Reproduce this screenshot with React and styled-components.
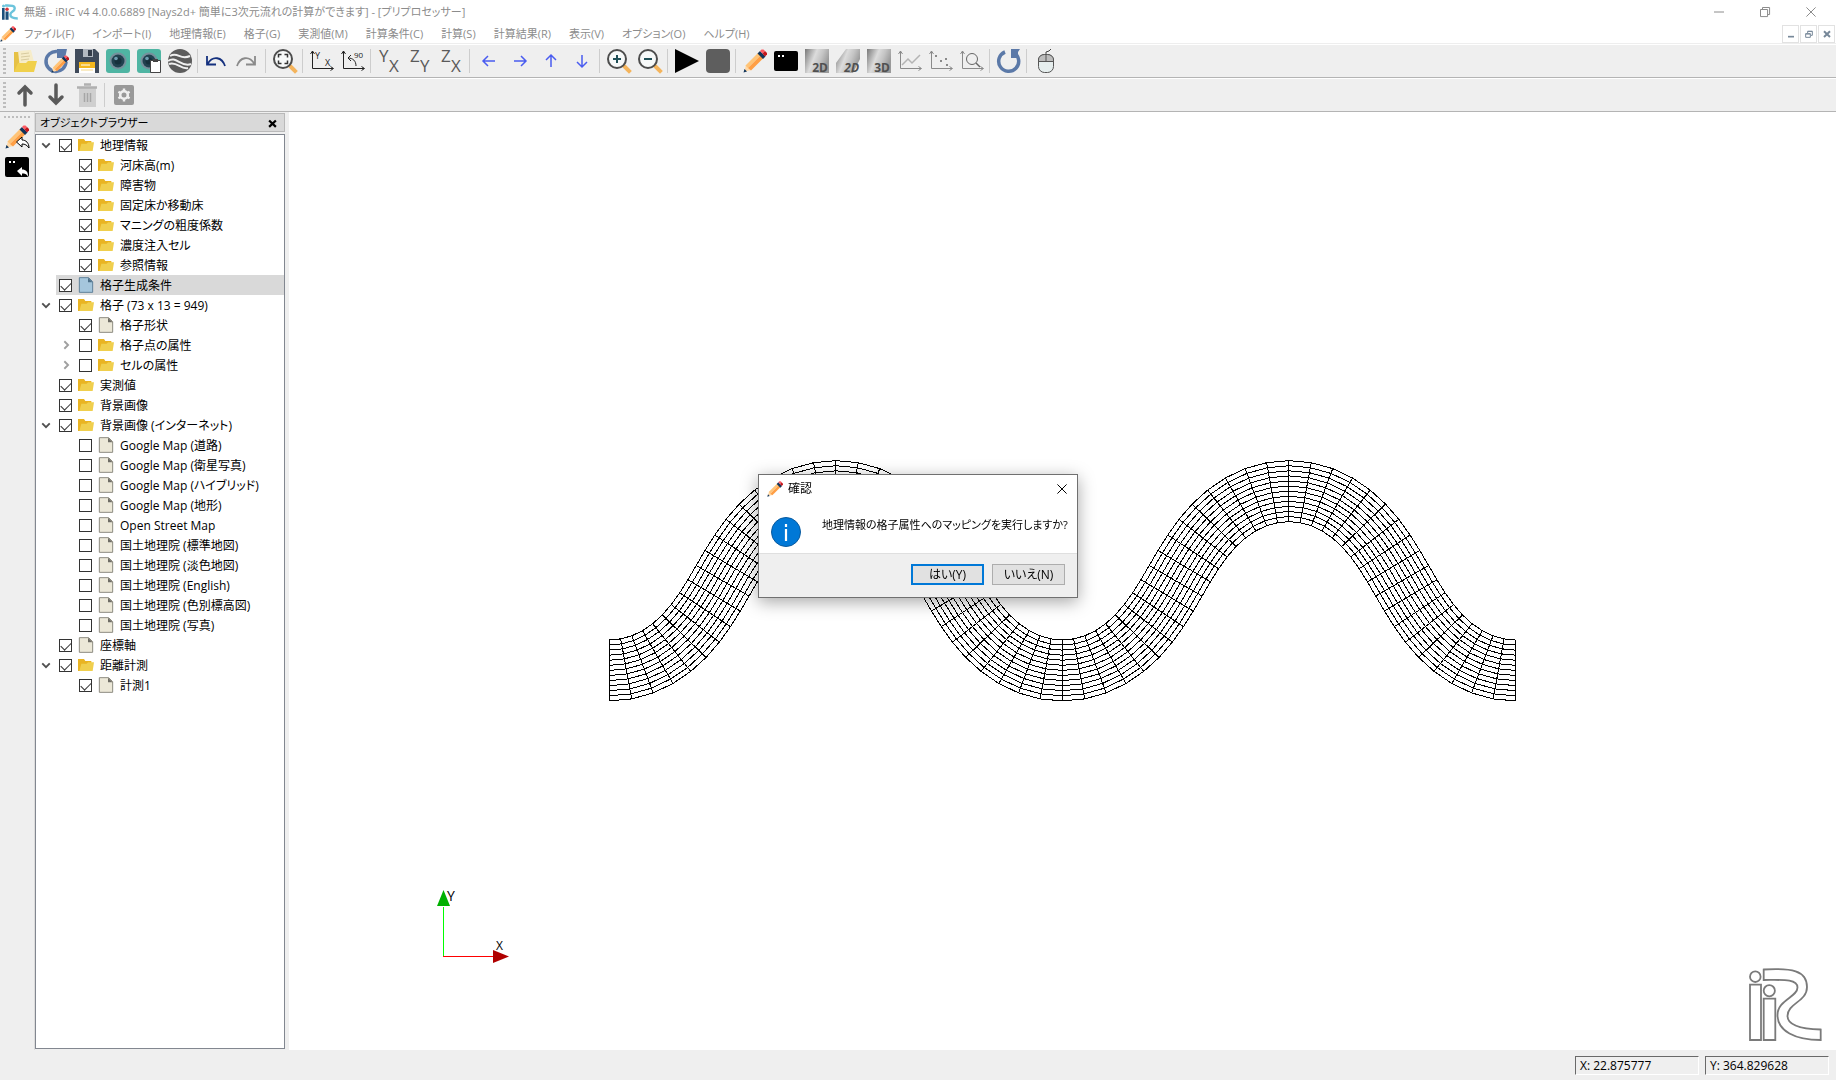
import React, { useState } from "react";
import styled, { createGlobalStyle, css } from "styled-components";

const TREE = [
  { label: "地理情報", depth: 0, open: true, checked: true, icon: "folder" },
  { label: "河床高(m)", depth: 1, checked: true, icon: "folder" },
  { label: "障害物", depth: 1, checked: true, icon: "folder" },
  { label: "固定床か移動床", depth: 1, checked: true, icon: "folder" },
  { label: "マニングの粗度係数", depth: 1, checked: true, icon: "folder" },
  { label: "濃度注入セル", depth: 1, checked: true, icon: "folder" },
  { label: "参照情報", depth: 1, checked: true, icon: "folder" },
  { label: "格子生成条件", depth: 0, checked: true, icon: "file", selected: true },
  { label: "格子 (73 x 13 = 949)", depth: 0, open: true, checked: true, icon: "folder" },
  { label: "格子形状", depth: 1, checked: true, icon: "file" },
  { label: "格子点の属性", depth: 1, open: false, icon: "folder" },
  { label: "セルの属性", depth: 1, open: false, icon: "folder" },
  { label: "実測値", depth: 0, checked: true, icon: "folder" },
  { label: "背景画像", depth: 0, checked: true, icon: "folder" },
  { label: "背景画像 (インターネット)", depth: 0, open: true, checked: true, icon: "folder" },
  { label: "Google Map (道路)", depth: 1, icon: "file" },
  { label: "Google Map (衛星写真)", depth: 1, icon: "file" },
  { label: "Google Map (ハイブリッド)", depth: 1, icon: "file" },
  { label: "Google Map (地形)", depth: 1, icon: "file" },
  { label: "Open Street Map", depth: 1, icon: "file" },
  { label: "国土地理院 (標準地図)", depth: 1, icon: "file" },
  { label: "国土地理院 (淡色地図)", depth: 1, icon: "file" },
  { label: "国土地理院 (English)", depth: 1, icon: "file" },
  { label: "国土地理院 (色別標高図)", depth: 1, icon: "file" },
  { label: "国土地理院 (写真)", depth: 1, icon: "file" },
  { label: "座標軸", depth: 0, checked: true, icon: "file" },
  { label: "距離計測", depth: 0, open: true, checked: true, icon: "folder" },
  { label: "計測1", depth: 1, checked: true, icon: "file" },
];

const MENUS = [
  "ファイル(F)",
  "インポート(I)",
  "地理情報(E)",
  "格子(G)",
  "実測値(M)",
  "計算条件(C)",
  "計算(S)",
  "計算結果(R)",
  "表示(V)",
  "オプション(O)",
  "ヘルプ(H)",
];

// "|" is a separator
const TOOLS = [
  "open", "reload", "save", "camera", "cameraCopy", "globe", "|",
  "undo", "redo", "|",
  "fit", "|",
  "axes", "rotate", "|",
  "xy", "yz", "xz", "|",
  "left", "right", "up", "down", "|",
  "zoomIn", "zoomOut", "|",
  "run", "stop", "|",
  "pencil", "console", "view2d", "view2dSkew", "view3d", "chart", "scatter", "chartZoom", "|",
  "refresh", "|",
  "mouse",
];

function Pencil() {
  return (
    <>
      <path d="M1 23l2-7 5 5z" fill="#ffd9a8" />
      <path d="M2.500 16.500L15 4l2.500 2.500L5 19z" fill="#ffc477" />
      <path d="M5 19L17.500 6.500L20.500 9L8 21.500z" fill="#ff9f45" />
      <path d="M14.500 4.500l2.500-2.500 5.500 5.500-2.500 2.500z" fill="#12355b" />
      <path d="M17 2l1.500-1.500h2L22 2l-2.500 2.500z" fill="#ff5a64" />
      <path d="M19.500 4.500L22 2l2 2v1.500L22 7.500z" fill="#c4161c" />
      <path d="M0.500 23.500l1-3.500 2.500 2.500z" fill="#12355b" />
    </>
  );
}

function Lens({ children }) {
  return (
    <>
      <path d="M17.500 17.500l4.500 4.500" stroke="#f4b45c" strokeWidth="4" strokeLinecap="square" />
      <circle cx="10" cy="10" r="9" fill="#f7f9f9" stroke="#4d4d4d" strokeWidth="2" />
      {children}
    </>
  );
}

function Letters({ a, b }) {
  return (
    <g fill="#5a5a5a" fontFamily="'Open Sans', sans-serif" fontSize="17">
      <text x="1" y="13">{a}</text>
      <text x="11" y="23">{b}</text>
    </g>
  );
}

function Metal({ shape, text, skew }) {
  return (
    <>
      <defs>
        <linearGradient id="metal" x1="0" y1="0" x2="1" y2="0.400">
          <stop offset="0" stopColor="#777" />
          <stop offset="0.450" stopColor="#dcdcdc" />
          <stop offset="0.700" stopColor="#c4c4c4" />
          <stop offset="1" stopColor="#9a9a9a" />
        </linearGradient>
      </defs>
      <path d={shape} fill="url(#metal)" />
      <text
        x="23"
        y="23"
        textAnchor="end"
        fontFamily="'Open Sans', sans-serif"
        fontSize="12"
        fontWeight="700"
        fontStyle={skew ? "italic" : "normal"}
        fill="#505050"
      >
        {text}
      </text>
    </>
  );
}

function Frame({ color }) {
  return (
    <g stroke={color} fill="none">
      <path d="M2.500 2v17.500H23" />
      <path d="M0.500 5l2-3 2 3M20.500 17.500l3 2-3 2" />
    </g>
  );
}

function Camera() {
  return (
    <>
      <rect width="24" height="24" rx="3" fill="#4fb5a3" />
      <circle cx="12" cy="12" r="8.500" fill="#76909c" />
      <circle cx="12" cy="12" r="6.500" fill="#21414f" />
      <circle cx="12" cy="12" r="3.500" fill="#16303c" />
      <circle cx="10" cy="9.500" r="1.800" fill="#6f9db0" />
    </>
  );
}

const ICONS = {
  open: (
    <>
      <path d="M1 3h6l2 3v17H1z" fill="#e6c145" />
      <path d="M5 2l13-1 3 12-14 7z" fill="#f6ecc9" />
      <path d="M8 5l8-1M8 8l9-1M8 11l8-1" stroke="#d8cba0" />
      <path d="M5 14h8l2-2h9l-3 11H1z" fill="#f0d04c" />
    </>
  ),
  reload: (
    <>
      <path d="M13 2.500A10 10 0 1 0 22 13" fill="none" stroke="#5b79a8" strokeWidth="3.500" />
      <path d="M13 0h10l-2 9h-8z" fill="#5b79a8" />
      <g transform="translate(7 6) scale(0.750)">
        <Pencil />
      </g>
    </>
  ),
  save: (
    <>
      <path d="M0 0h20l4 4v20H0z" fill="#3f4a5a" />
      <path d="M8 0h10v8H8z" fill="#b3b9c1" />
      <path d="M13 1h4v6h-4z" fill="#333c49" />
      <path d="M4 13h16v11H4z" fill="#fff" />
      <path d="M4 13h16v6H4z" fill="#f4b71e" />
      <path d="M6 16h9" stroke="#fff" />
      <path d="M6 21h12" stroke="#f4d78a" />
    </>
  ),
  camera: <Camera />,
  cameraCopy: (
    <>
      <Camera />
      <path d="M13.500 11.500h10v12h-10z" fill="#fff" stroke="#444" />
      <path d="M16 10h5v3h-5z" fill="#444" />
    </>
  ),
  globe: (
    <>
      <circle cx="12" cy="12" r="12" fill="#5c5c5c" />
      <path
        d="M2 7c8-5 10 5 20 0M0 12c8-6 13 7 23 3M1 15c8-3 12 6 19 4"
        fill="none"
        stroke="#efefef"
        strokeWidth="2"
      />
    </>
  ),
  undo: <path d="M20 17C17 8 8 6 2.500 15M2 7v8.500h9" fill="none" stroke="#14307e" strokeWidth="1.800" />,
  redo: <path d="M1 17C4 8 13 6 18.500 15M19 7v8.500h-9" fill="none" stroke="#8a8a8a" strokeWidth="1.800" />,
  fit: (
    <Lens>
      <path
        d="M5.500 8.500v-3h3M11.500 5.500h3v3M14.500 11.500v3h-3M8.500 14.500h-3v-3"
        fill="none"
        stroke="#333"
        strokeWidth="1.500"
      />
    </Lens>
  ),
  axes: (
    <>
      <Frame color="#222" />
      <g fill="#222" fontFamily="'Open Sans', sans-serif" fontSize="9">
        <text x="5" y="10">Y</text>
        <text x="15" y="17">X</text>
      </g>
    </>
  ),
  rotate: (
    <>
      <Frame color="#222" />
      <path d="M15 17C15 12 12 9 7 9M10 6L7 9l3 3" fill="none" stroke="#222" />
      <text x="13" y="9" fill="#222" fontFamily="'Open Sans', sans-serif" fontSize="8">90</text>
    </>
  ),
  xy: <Letters a="Y" b="X" />,
  yz: <Letters a="Z" b="Y" />,
  xz: <Letters a="Z" b="X" />,
  left: <path d="M18 12H7M11 7l-5 5 5 5" fill="none" stroke="#4a5cf0" strokeWidth="1.500" />,
  right: <path d="M6 12h11M13 7l5 5-5 5" fill="none" stroke="#4a5cf0" strokeWidth="1.500" />,
  up: <path d="M12 18V7M7 11l5-5 5 5" fill="none" stroke="#4a5cf0" strokeWidth="1.500" />,
  down: <path d="M12 6v11M7 13l5 5 5-5" fill="none" stroke="#4a5cf0" strokeWidth="1.500" />,
  zoomIn: (
    <Lens>
      <path d="M10 6v8M6 10h8" stroke="#1f4f57" strokeWidth="2" />
    </Lens>
  ),
  zoomOut: (
    <Lens>
      <path d="M6 10h8" stroke="#1f4f57" strokeWidth="2" />
    </Lens>
  ),
  run: <path d="M0 0l24 12L0 24z" fill="#000" />,
  stop: <rect width="24" height="24" rx="4" fill="#5e5e5e" />,
  pencil: <Pencil />,
  console: (
    <>
      <rect y="2" width="24" height="20" rx="2" fill="#000" />
      <path d="M4 7h2M8 7h2" stroke="#fff" strokeWidth="2" />
    </>
  ),
  view2d: <Metal shape="M0 0h24v24H0z" text="2D" />,
  view2dSkew: <Metal shape="M10 0h14v10l-7 14H0V14z" text="2D" skew />,
  view3d: <Metal shape="M0 0h24v24H0z" text="3D" />,
  chart: (
    <>
      <Frame color="#8a8a8a" />
      <path d="M4 16l6-6 4 4 8-8" fill="none" stroke="#b4b4b4" strokeWidth="1.500" />
    </>
  ),
  scatter: (
    <>
      <Frame color="#8a8a8a" />
      <path d="M6 7h2M11 12h2M16 10h2M17 16h2" stroke="#8a8a8a" strokeWidth="2" />
    </>
  ),
  chartZoom: (
    <>
      <Frame color="#8a8a8a" />
      <circle cx="12" cy="10" r="5.500" fill="none" stroke="#666" />
      <path d="M16 14l4 4" stroke="#666" strokeWidth="1.500" />
    </>
  ),
  refresh: (
    <>
      <path d="M17 3.800A10 10 0 1 1 8 3" fill="none" stroke="#5b79a8" strokeWidth="3.500" />
      <path d="M14 0h9l-2 3v6h-7z" fill="#5b79a8" />
    </>
  ),
  mouse: (
    <>
      <path d="M12 6V3l3-1 2-2" fill="none" stroke="#444" />
      <rect x="4.500" y="5.500" width="15" height="18" rx="6" fill="#e6eeee" stroke="#555" />
      <path d="M4.500 12.500V11a6 5 0 0 1 6-5.500h3a6 5 0 0 1 6 5.500v1.500z" fill="#bcbcbc" stroke="#555" />
      <path d="M12 6v6" stroke="#555" />
    </>
  ),
  moveUp: <path d="M12 22V4M6 10l6-6 6 6" fill="none" stroke="#5a5a5a" strokeWidth="3.500" strokeLinecap="round" />,
  moveDown: <path d="M12 2v18M6 14l6 6 6-6" fill="none" stroke="#5a5a5a" strokeWidth="3.500" strokeLinecap="round" />,
  trash: (
    <>
      <path d="M4 5h17v19H4z" fill="#cfcfcf" />
      <path d="M2 4.500h20M9 1.500h7" stroke="#b0b0b0" strokeWidth="2.500" />
      <path d="M9.500 10v9M12.500 10v9M15.500 10v9" stroke="#a6a6a6" strokeWidth="1.500" />
    </>
  ),
  settings: (
    <>
      <rect x="2" y="2" width="20" height="20" rx="2" fill="#999" />
      <circle cx="12" cy="12" r="3.800" fill="none" stroke="#efefef" strokeWidth="2.600" />
      <path
        d="M12 5.500v3M12 15.500v3M6.400 8.800l2.600 1.500M15 13.700l2.600 1.500M6.400 15.200l2.600-1.500M15 10.300l2.600-1.500"
        stroke="#efefef"
        strokeWidth="2.400"
      />
    </>
  ),
  pencilBack: (
    <>
      <Pencil />
      <path d="M11.500 17l5.500-5v3c4 0 7 3 7 8-2-3-4-4-7-4v3z" fill="#fff" stroke="#000" />
    </>
  ),
  consoleBack: (
    <>
      <rect y="2" width="24" height="20" rx="2" fill="#000" />
      <path d="M4 7h2M8 7h2" stroke="#fff" strokeWidth="2" />
      <path d="M12 16l5-4v2.500c4 0 6 2 6 7-2-3-3-3-6-3V21z" fill="#fff" />
    </>
  ),
  folder: (
    <>
      <path d="M0 3h9l2 3h9v4L5 21H0z" fill="#e9b422" />
      <path d="M5 10h8l2-2h9l-2 13H2z" fill="#f0cf4e" />
    </>
  ),
  file: (
    <>
      <path d="M2 1h14l6 6v16H2z" fill="#ece8d8" stroke="#8d8b80" strokeWidth="1.500" />
      <path d="M15 1v7h7z" fill="#6e6c64" />
    </>
  ),
  fileSelected: (
    <>
      <path d="M2 1h14l6 6v16H2z" fill="#a5c6dc" stroke="#5f8199" strokeWidth="1.500" />
      <path d="M15 1v7h7z" fill="#4d6f88" />
    </>
  ),
  minimize: <path d="M0 12h24" stroke="#8c8c8c" strokeWidth="2.400" />,
  restore: (
    <path
      d="M1.200 6h17v17h-17zM6 6V1.200h17V18h-5"
      fill="none"
      stroke="#8c8c8c"
      strokeWidth="2.400"
    />
  ),
  close: <path d="M1 1l22 22M23 1L1 23" stroke="currentColor" strokeWidth="2.400" />,
  mdiMin: <path d="M3 20h18" stroke="#778899" strokeWidth="5" />,
  mdiRestore: (
    <path
      d="M2 11h14v11H2zM2 12h14M8 9V4h14v12h-4M8 4h14"
      fill="none"
      stroke="#778899"
      strokeWidth="3"
    />
  ),
  mdiClose: <path d="M3 4l18 17M21 4L3 21" stroke="currentColor" strokeWidth="6" />,
  arrowOpen: <path d="M3 8l9 9 9-9" fill="none" stroke="#505050" strokeWidth="4.500" />,
  arrowClosed: <path d="M8 3l9 9-9 9" fill="none" stroke="#a0a0a0" strokeWidth="4.500" />,
};

function Icon({ name, size = 24 }) {
  return (
    <svg width={size} height={size} viewBox="0 0 24 24" aria-hidden="true">
      {ICONS[name]}
    </svg>
  );
}

function AppLogo() {
  return (
    <svg width="16" height="16" viewBox="0 0 73 73" aria-hidden="true">
      <circle cx="7" cy="9" r="7" fill="#6cc4dc" />
      <circle cx="23" cy="24" r="8" fill="#d9343a" />
      <path d="M0 18h12v54H0zM16 34h14v38H16z" fill="#1c4f7c" />
      <path
        d="M14 7C40 7 58 5 58 20C58 34 38 34 38 48C38 62 50 66 72 66"
        fill="none"
        stroke="#6cc4dc"
        strokeWidth="11"
      />
    </svg>
  );
}

const CELLS = 72;
const LINES = 12;
const WAVELENGTH = 453;
const CHANNEL_WIDTH = 61;
const MAX_ANGLE = Math.PI / 3;

// Sine-generated channel: the direction angle follows a sine along the centre line
function buildMesh() {
  const steps = 40;
  const raw = [{ x: 0, y: 0, angle: 0 }];
  let x = 0;
  let y = 0;
  for (let i = 1; i <= CELLS * steps; i++) {
    const mid = MAX_ANGLE * Math.sin((4 * Math.PI * (i - 0.5)) / (CELLS * steps));
    x += Math.cos(mid);
    y += Math.sin(mid);
    if (i % steps === 0) {
      const angle = MAX_ANGLE * Math.sin((4 * Math.PI * i) / (CELLS * steps));
      raw.push({ x, y, angle });
    }
  }
  const scale = (2 * WAVELENGTH) / x;
  const nodes = [];
  for (let j = 0; j <= LINES; j++) {
    const offset = CHANNEL_WIDTH * (j / LINES - 0.5);
    nodes.push(
      raw.map((p) => [
        p.x * scale - Math.sin(p.angle) * offset + 1.4,
        210.4 - p.y * scale - Math.cos(p.angle) * offset,
      ])
    );
  }
  const toPath = (pts) => "M" + pts.map((p) => p[0].toFixed(1) + " " + p[1].toFixed(1)).join("L");
  const along = nodes.map(toPath);
  const across = raw.map((_, i) => toPath([nodes[0][i], nodes[LINES][i]]));
  return along.concat(across).join("");
}

const MESH = buildMesh();

function ObjectTree() {
  const [checked, setChecked] = useState(TREE.map((item) => !!item.checked));
  const toggle = (index) => setChecked(checked.map((c, i) => (i === index ? !c : c)));

  return (
    <Tree>
      {TREE.map((item, index) => (
        <TreeRow key={item.label} depth={item.depth}>
          <TreeArrow>
            {item.open !== undefined && (
              <PlainButton aria-label={item.label + "を開閉"}>
                <Icon name={item.open ? "arrowOpen" : "arrowClosed"} size={10} />
              </PlainButton>
            )}
          </TreeArrow>
          <TreeItem selected={item.selected}>
            <CheckBox type="checkbox" checked={checked[index]} onChange={() => toggle(index)} />
            <Icon name={item.selected ? "fileSelected" : item.icon} size={16} />
            <TreeLabel>{item.label}</TreeLabel>
          </TreeItem>
        </TreeRow>
      ))}
    </Tree>
  );
}

function App() {
  return (
    <Window>
      <GlobalStyle />
      <TitleBar>
        <AppLogo />
        <Title>無題 - iRIC v4 4.0.0.6889 [Nays2d+ 簡単に3次元流れの計算ができます] - [プリプロセッサー]</Title>
        <WindowButton aria-label="最小化"><Icon name="minimize" size={10} /></WindowButton>
        <WindowButton aria-label="元に戻す"><Icon name="restore" size={10} /></WindowButton>
        <WindowButton aria-label="閉じる"><Icon name="close" size={10} /></WindowButton>
      </TitleBar>

      <MenuBar>
        <Icon name="pencil" size={16} />
        <Menus>
          {MENUS.map((menu) => (
            <MenuItem key={menu}>{menu}</MenuItem>
          ))}
        </Menus>
        <MdiButton aria-label="子ウィンドウを最小化"><Icon name="mdiMin" size={8} /></MdiButton>
        <MdiButton aria-label="子ウィンドウを元に戻す"><Icon name="mdiRestore" size={8} /></MdiButton>
        <MdiButton aria-label="子ウィンドウを閉じる"><Icon name="mdiClose" size={8} /></MdiButton>
      </MenuBar>

      <Toolbar>
        <Grip />
        {TOOLS.map((tool, i) =>
          tool === "|" ? (
            <Separator key={i} />
          ) : (
            <ToolButton key={i} aria-label={tool}><Icon name={tool} /></ToolButton>
          )
        )}
      </Toolbar>
      <Toolbar>
        <Grip />
        <ToolButton aria-label="moveUp"><Icon name="moveUp" /></ToolButton>
        <ToolButton aria-label="moveDown"><Icon name="moveDown" /></ToolButton>
        <ToolButton aria-label="trash"><Icon name="trash" /></ToolButton>
        <Separator />
        <ToolButton aria-label="settings"><Icon name="settings" /></ToolButton>
      </Toolbar>

      <Workspace>
        <SideBar>
          <Grip horizontal />
          <SideButton aria-label="pencilBack"><Icon name="pencilBack" /></SideButton>
          <SideButton aria-label="consoleBack"><Icon name="consoleBack" /></SideButton>
        </SideBar>
        <Dock>
          <DockTitle>
            オブジェクトブラウザー
            <PlainButton aria-label="パネルを閉じる"><Icon name="mdiClose" size={9} /></PlainButton>
          </DockTitle>
          <ObjectTree />
        </Dock>
        <Canvas>
          <svg width="909" height="242" viewBox="0 0 909 242" aria-hidden="true">
            <path d={MESH} fill="none" stroke="#000" shapeRendering="crispEdges" />
          </svg>
          <Axes width="80" height="80" viewBox="0 0 80 80">
            <path d="M10.500 20v50" stroke="#00ff00" />
            <path d="M10 69.500h52" stroke="#ff0000" />
            <path d="M10.500 3l6.500 16H4z" fill="#00b000" />
            <path d="M60 63v13l16-6.500z" fill="#b00000" />
            <text x="14" y="14" fontSize="14">Y</text>
            <text x="63" y="63" fontSize="12">X</text>
          </Axes>
          <Watermark width="73" height="73" viewBox="0 0 73 73" fill="none" stroke="#7a7a7a" strokeWidth="1.800">
            <circle cx="6.300" cy="8.700" r="5.300" />
            <circle cx="20.300" cy="22.700" r="5.600" />
            <path d="M1 16.700h11V72H1zM14.700 30.700h11.600V72H14.700z" />
            <path d="M14.700 1.500C42 0 58 2 58 19C58 34 38.500 35 38.500 48C38.500 58 54 61 71.700 61.500V72C46 72 28.500 63 28.500 47C28.500 32 48.500 29 48.500 19.500C48.500 10.500 32 12 14.700 12Z" />
          </Watermark>
        </Canvas>
      </Workspace>

      <StatusBar>
        <StatusField>X: 22.875777</StatusField>
        <StatusField>Y: 364.829628</StatusField>
      </StatusBar>

      <Overlay>
        <Dialog role="dialog" aria-labelledby="dialog-title">
          <DialogTitle>
            <Icon name="pencil" size={16} />
            <span id="dialog-title">確認</span>
            <PlainButton aria-label="閉じる"><Icon name="close" size={10} /></PlainButton>
          </DialogTitle>
          <DialogBody>
            <svg width="30" height="30" viewBox="0 0 30 30" aria-hidden="true">
              <circle cx="15" cy="15" r="14.500" fill="#0078d7" stroke="#0a5a9e" />
              <path d="M15 12v12M15 7v3" stroke="#fff" strokeWidth="2.200" />
            </svg>
            <p>地理情報の格子属性へのマッピングを実行しますか?</p>
          </DialogBody>
          <DialogFooter>
            <DialogButton primary>はい(Y)</DialogButton>
            <DialogButton>いいえ(N)</DialogButton>
          </DialogFooter>
        </Dialog>
      </Overlay>
    </Window>
  );
}

export default App;

const GlobalStyle = createGlobalStyle`
  * {
    box-sizing: border-box;
  }
  body {
    margin: 0;
    font-family: "Open Sans", "Noto Sans CJK JP", sans-serif;
    font-size: 12px;
    line-height: 16px;
    font-feature-settings: "palt";
    color: #000;
  }
  button {
    font: inherit;
    font-feature-settings: inherit;
    padding: 0;
  }
  svg {
    display: block;
    flex-shrink: 0;
    overflow: visible;
  }
`;

const Window = styled.div`
  display: flex;
  flex-direction: column;
  height: 100vh;
  background: #fff;
  overflow: hidden;
`;

const TitleBar = styled.header`
  display: flex;
  align-items: center;
  height: 24px;
  padding: 0 2px;
`;

const Title = styled.span`
  flex: 1;
  margin-left: 6px;
  color: #8c8c8c;
  font-size: 11px;
  white-space: nowrap;
`;

const PlainButton = styled.button`
  display: flex;
  align-items: center;
  justify-content: center;
  border: none;
  background: none;
  color: #000;
`;

const WindowButton = styled(PlainButton)`
  width: 46px;
  height: 20px;
  color: #8c8c8c;
`;

const MenuBar = styled.nav`
  display: flex;
  align-items: center;
  height: 20px;
  margin-bottom: 1px;
  border-bottom: 1px solid #eee;
`;

const Menus = styled.div`
  display: flex;
  flex: 1;
  gap: 18px;
  margin-left: 8px;
`;

const MenuItem = styled(PlainButton)`
  color: #8c8c8c;
  font-size: 11px;
  white-space: nowrap;
`;

const MdiButton = styled(PlainButton)`
  width: 17px;
  height: 18px;
  margin-right: 1px;
  border: 1px solid #e2e2e2;
  color: #778899;
`;

const Toolbar = styled.div`
  display: flex;
  align-items: center;
  height: 33px;
  margin-bottom: 1px;
  padding-left: 3px;
  background: #efefef;
  border-bottom: 1px solid #b4b4b4;

  & + & {
    margin-bottom: 0;
  }
`;

const Grip = styled.div`
  width: 3px;
  height: 26px;
  margin-right: 3px;
  background: repeating-linear-gradient(#bdbdbd 0 2px, transparent 2px 4px);

  ${(props) =>
    props.horizontal &&
    css`
      width: 26px;
      height: 2px;
      margin: 0 0 4px;
      background: repeating-linear-gradient(90deg, #bdbdbd 0 2px, transparent 2px 4px);
    `}
`;

const ToolButton = styled(PlainButton)`
  width: 31px;
  height: 30px;
`;

const Separator = styled.div`
  width: 1px;
  height: 24px;
  margin: 0 3px 0 2px;
  background: #cdcdcd;
`;

const Workspace = styled.main`
  display: flex;
  flex: 1;
  min-height: 0;
  background: #efefef;
`;

const SideBar = styled.aside`
  display: flex;
  flex-direction: column;
  align-items: center;
  width: 35px;
  padding-top: 4px;
  border-right: 1px solid #dcdcdc;
`;

const SideButton = styled(PlainButton)`
  width: 30px;
  height: 30px;
`;

const Dock = styled.section`
  display: flex;
  flex-direction: column;
  width: 250px;
  padding: 1px 0;
`;

const DockTitle = styled.div`
  display: flex;
  align-items: center;
  justify-content: space-between;
  height: 19px;
  margin-bottom: 2px;
  padding: 1px 7px 0 4px;
  border: 1px solid #b9b9b9;
  background: #d9d9d9;
  font-size: 11px;
`;

const Tree = styled.ul`
  flex: 1;
  margin: 0;
  padding: 0;
  border: 1px solid #828790;
  background: #fff;
  list-style: none;
  overflow: hidden;
`;

const TreeRow = styled.li`
  display: flex;
  height: 20px;
  padding-left: ${(props) => props.depth * 20}px;
`;

const TreeArrow = styled.div`
  display: flex;
  align-items: center;
  justify-content: center;
  width: 20px;
`;

const TreeItem = styled.label`
  display: flex;
  flex: 1;
  align-items: center;
  gap: 6px;
  padding-left: 3px;
  white-space: nowrap;
  background: ${(props) => (props.selected ? "#d9d9d9" : "none")};
`;

const TreeLabel = styled.span`
  padding-top: 2px;
`;

const CheckBox = styled.input`
  appearance: none;
  display: flex;
  justify-content: center;
  width: 13px;
  height: 13px;
  margin: 0;
  border: 1px solid #333;
  background: #fff;

  &:checked::before {
    content: "";
    width: 9px;
    height: 5px;
    margin-top: 2px;
    border: solid #333;
    border-width: 0 0 1px 1px;
    transform: rotate(-45deg);
  }
`;

const Canvas = styled.section`
  position: relative;
  display: flex;
  flex: 1;
  align-items: center;
  justify-content: center;
  margin-left: 4px;
  background: #fff;
`;

const Axes = styled.svg`
  position: absolute;
  left: 144px;
  bottom: 83px;
  font-family: "Open Sans", sans-serif;
`;

const Watermark = styled.svg`
  position: absolute;
  right: 14px;
  bottom: 9px;
`;

const StatusBar = styled.footer`
  display: flex;
  align-items: center;
  justify-content: flex-end;
  gap: 6px;
  height: 30px;
  padding-right: 7px;
  background: #efefef;
`;

const StatusField = styled.div`
  width: 124px;
  height: 19px;
  padding: 1px 0 0 4px;
  border: 1px solid #fff;
  border-top: 1px solid #696969;
  border-left: 1px solid #696969;
`;

const Overlay = styled.div`
  position: fixed;
  inset: 0;
  display: flex;
  align-items: center;
  justify-content: center;
  padding-bottom: 8px;
`;

const Dialog = styled.section`
  width: 320px;
  border: 1px solid #707070;
  background: #fff;
  box-shadow: 0 4px 16px rgba(0, 0, 0, 0.35);
`;

const DialogTitle = styled.header`
  display: flex;
  align-items: center;
  gap: 5px;
  height: 28px;
  padding: 0 10px 0 8px;

  span {
    flex: 1;
  }
`;

const DialogBody = styled.div`
  display: flex;
  gap: 21px;
  height: 51px;
  padding: 14px 10px 0 12px;
  border-bottom: 1px solid #dfdfdf;

  p {
    margin: 0;
    font-size: 11px;
    white-space: nowrap;
  }
`;

const DialogFooter = styled.footer`
  display: flex;
  justify-content: flex-end;
  gap: 8px;
  padding: 10px 12px 12px;
  background: #efefef;
`;

const DialogButton = styled.button`
  width: 73px;
  height: 21px;
  border: ${(props) => (props.primary ? "2px solid #0078d7" : "1px solid #adadad")};
  background: #e1e1e1;
`;
